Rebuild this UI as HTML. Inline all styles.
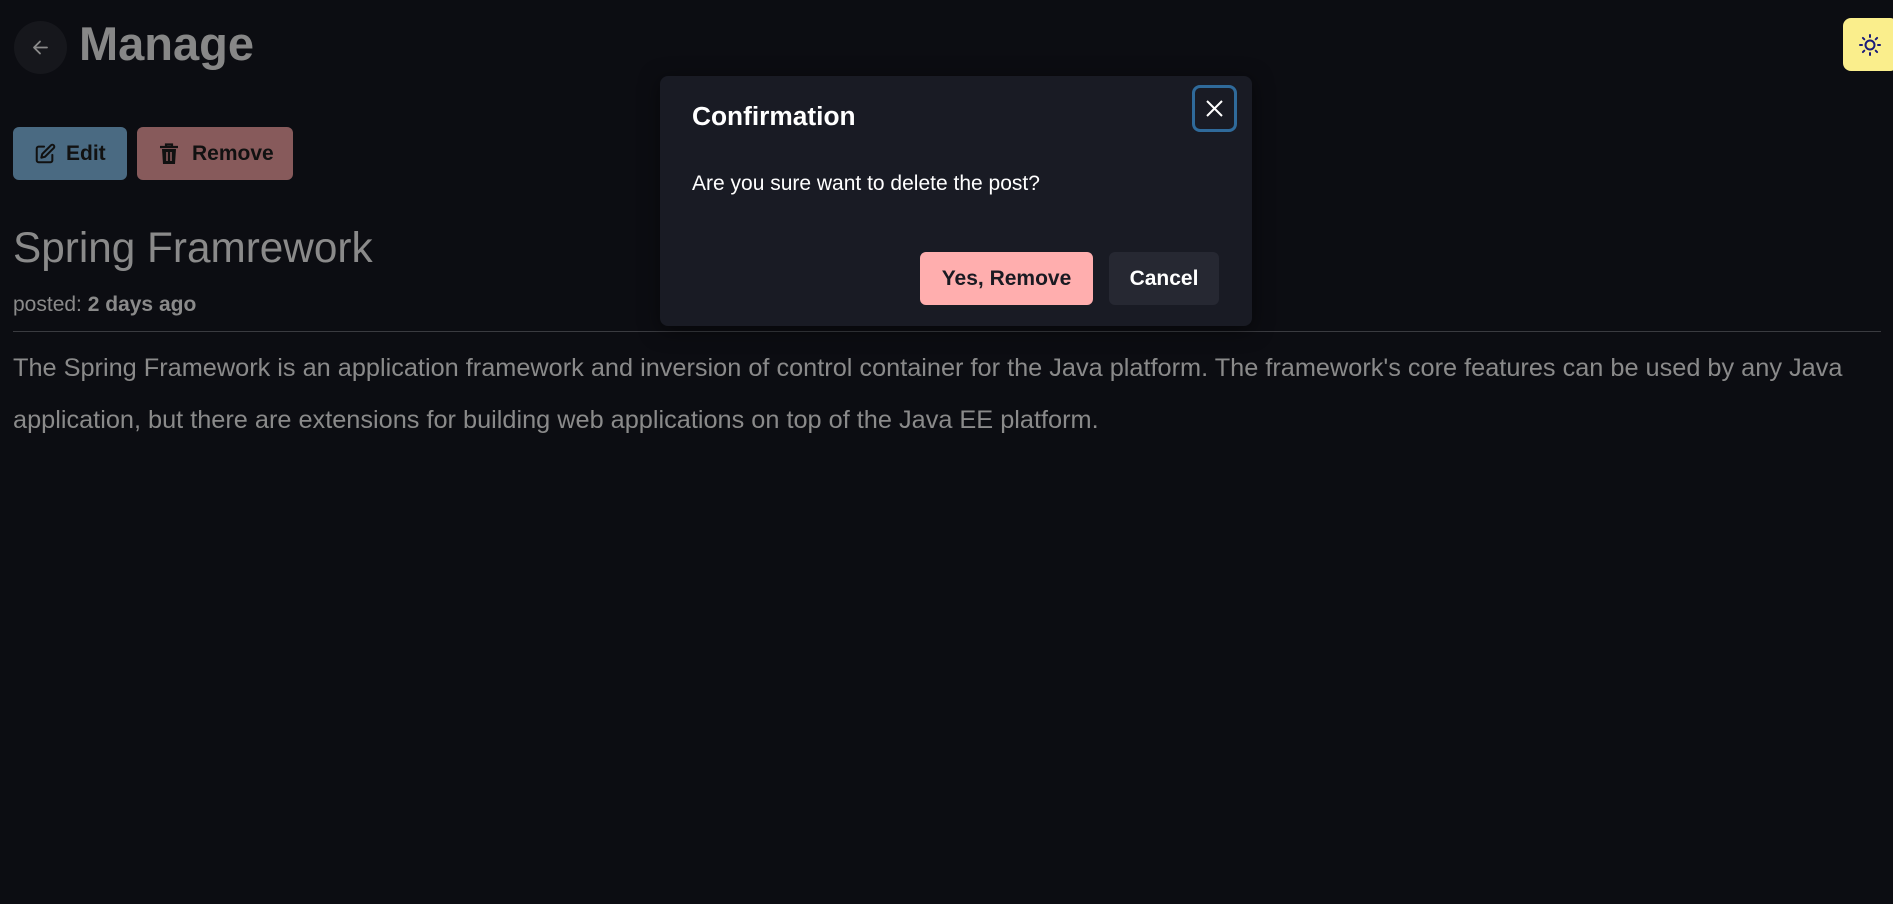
<!DOCTYPE html>
<html><head><meta charset="utf-8"><style>
*{margin:0;padding:0;box-sizing:border-box}
body{width:1893px;height:904px;background:#0c0d12;font-family:"Liberation Sans",sans-serif;position:relative;overflow:hidden}
.a{position:absolute}
.back{left:14px;top:21px;width:53px;height:53px;border-radius:50%;background:#16171c}
h1{left:79px;top:16px;font-size:47px;font-weight:bold;color:#878787}
.btn{height:53px;border-radius:6px;display:flex;align-items:center;font-weight:bold;font-size:21px;color:#111}
.t{color:#8a8a8a}
.modal{left:660px;top:76px;width:592px;height:250px;background:#191b24;border-radius:8px;box-shadow:0 4px 20px rgba(0,0,0,.5)}
</style></head><body>
<div class="a back"><svg width="53" height="53" viewBox="0 0 53 53"><path d="M33 26.5H20M26 20.5l-6 6 6 6" stroke="#8a8a8a" stroke-width="1.8" fill="none" stroke-linecap="round" stroke-linejoin="round"/></svg></div>
<h1 class="a">Manage</h1>
<div class="a btn" style="left:13px;top:127px;width:114px;background:#4a6a82;padding-left:21px">
<svg width="22" height="22" viewBox="0 0 24 24" fill="none" stroke="#111" stroke-width="2.2" stroke-linecap="round" stroke-linejoin="round"><path d="M11 4H5a2 2 0 0 0-2 2v13a2 2 0 0 0 2 2h13a2 2 0 0 0 2-2v-6"/><path d="M18.5 2.5a2.1 2.1 0 0 1 3 3L12 15l-4 1 1-4z"/></svg><span style="margin-left:10px">Edit</span></div>
<div class="a btn" style="left:137px;top:127px;width:156px;background:#875a5b;padding-left:22px">
<svg width="20" height="22" viewBox="0 0 20 22"><path d="M1 4h18M7 4V1.5h6V4" stroke="#111" stroke-width="2.2" fill="none"/><path d="M3 6h14l-1 15H4z" fill="#111"/><path d="M8 9v9M12 9v9" stroke="#875a5b" stroke-width="1.6"/></svg><span style="margin-left:13px">Remove</span></div>
<div class="a t" style="left:13px;top:224px;font-size:42.3px">Spring Framrework</div>
<div class="a t" style="left:13px;top:293px;font-size:21px">posted: <b>2 days ago</b></div>
<div class="a" style="left:13px;top:331px;width:1868px;height:1px;background:#3a3b40"></div>
<div class="a t" style="left:13px;top:342px;width:1870px;font-size:25.3px;line-height:52px">The Spring Framework is an application framework and inversion of control container for the Java platform. The framework's core features can be used by any Java application, but there are extensions for building web applications on top of the Java EE platform.</div>
<div class="a" style="left:1843px;top:18px;width:55px;height:53px;background:#faee8c;border-radius:8px">
<svg class="a" style="left:16px;top:16px" width="22" height="22" viewBox="0 0 22 22" fill="none" stroke="#1a1a7a" stroke-width="2" stroke-linecap="round"><circle cx="11" cy="11" r="4.5"/><path d="M11 1v2M11 19v2M1 11h2M19 11h2M3.9 3.9l1.4 1.4M16.7 16.7l1.4 1.4M3.9 18.1l1.4-1.4M16.7 5.3l1.4-1.4"/></svg></div>
<div class="a modal">
<div class="a" style="left:32px;top:25px;font-size:26.3px;font-weight:bold;color:#fff">Confirmation</div>
<div class="a" style="left:532px;top:9px;width:45px;height:47px;border:3px solid #2f6a9a;border-radius:8px">
<svg class="a" style="left:10px;top:11px" width="19" height="19" viewBox="0 0 19 19"><path d="M2 2l15 15M17 2L2 17" stroke="#fff" stroke-width="2"/></svg></div>
<div class="a" style="left:32px;top:96px;font-size:21px;color:#fff">Are you sure want to delete the post?</div>
<div class="a btn" style="left:260px;top:176px;width:173px;background:#ffaeae;justify-content:center;color:#1a1a22">Yes, Remove</div>
<div class="a btn" style="left:449px;top:176px;width:110px;background:#262832;justify-content:center;color:#fff">Cancel</div>
</div>
</body></html>
